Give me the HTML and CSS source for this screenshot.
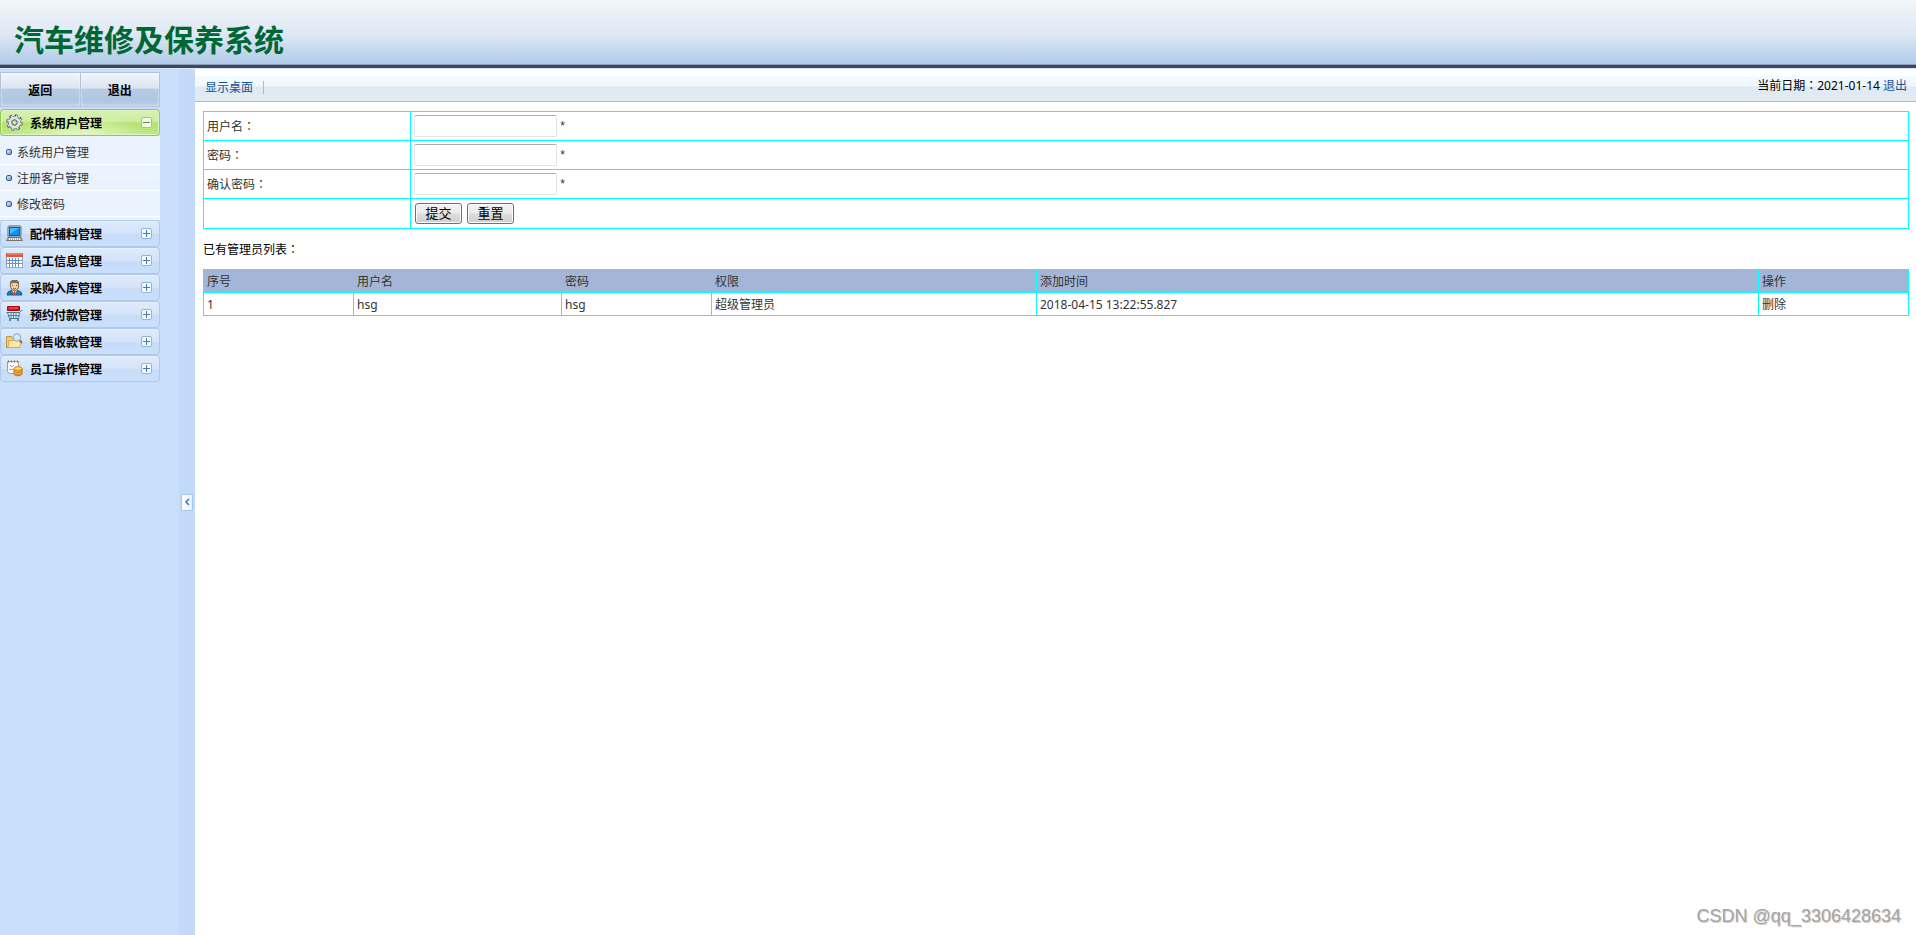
FILE: index.html
```html
<!DOCTYPE html>
<html lang="zh-CN">
<head>
<meta charset="utf-8">
<title>汽车维修及保养系统</title>
<link rel="stylesheet" href="styles.css">
</head>
<body>
<header class="banner"><h1>汽车维修及保养系统</h1></header>
<div class="frame">
  <aside class="sidebar">
    <div class="actions">
      <button type="button">返回</button>
      <button type="button">退出</button>
    </div>
    <nav class="menu">
      <button type="button" class="group open" aria-expanded="true">
        <svg class="icon" viewBox="0 0 17 17"><circle cx="8.500" cy="8.500" r="6.800" fill="none" stroke="#5c646e" stroke-width="3" stroke-dasharray="3 2.340"/><circle cx="8.500" cy="8.500" r="4.800" fill="none" stroke="#6b737d" stroke-width="4"/><circle cx="8.500" cy="8.500" r="6.500" fill="none" stroke="#dfe3e7" stroke-width="2" stroke-dasharray="1.500 3.605" stroke-dashoffset="-.7"/><circle cx="8.500" cy="8.500" r="4.500" fill="none" stroke="#dfe3e7" stroke-width="2.800"/><circle cx="8.500" cy="8.500" r="2.600" fill="#c9e89c" stroke="#5d656d"/></svg>
        <span>系统用户管理</span>
        <svg class="toggle" viewBox="0 0 11 11"><rect x=".5" y=".5" width="10" height="10" rx="1.500" fill="#f4fbe9" stroke="#a5c77c"/><path d="M2 5.500h7" stroke="#5f8c3c"/></svg>
      </button>
      <ul class="submenu">
        <li><a href="#">系统用户管理</a></li>
        <li><a href="#">注册客户管理</a></li>
        <li><a href="#">修改密码</a></li>
      </ul>
      <button type="button" class="group" aria-expanded="false">
        <svg class="icon" viewBox="0 0 17 17"><rect x="2" y="1" width="13" height="11" rx="1" fill="#dce8ef" stroke="#48677d"/><rect x="3.500" y="2.500" width="10" height="8" fill="#0b92f7" stroke="#0561b8"/><path d="M4 3h9L4 9z" fill="#48b8ff"/><path d="M2 12.500h13l1.500 3H.5z" fill="#eee" stroke="#76716d"/><path d="M2 14h13" stroke="#66605b" stroke-dasharray="1 1"/></svg>
        <span>配件辅料管理</span>
        <svg class="toggle" viewBox="0 0 11 11"><rect x=".5" y=".5" width="10" height="10" rx="1.500" fill="#f5faff" stroke="#8fb4df"/><path d="M2 5.500h7M5.500 2v7" stroke="#4878b4"/></svg>
      </button>
      <button type="button" class="group" aria-expanded="false">
        <svg class="icon" viewBox="0 0 17 17"><path d="M.5 1.500h16v14H.5z" fill="#fff" stroke="#77a3cc"/><path d="M0 1h17v4H0z" fill="#e4523f"/><path d="M1 2h15" stroke="#ff9a84"/><path d="M1 8.500h15M1 11.500h15M3.500 6v9M6.500 6v9M9.500 6v9M12.500 6v9" stroke="#5f95c8"/><path d="M0 15.500h17M16.500 5v11" stroke="#a5aaad"/></svg>
        <span>员工信息管理</span>
        <svg class="toggle" viewBox="0 0 11 11"><rect x=".5" y=".5" width="10" height="10" rx="1.500" fill="#f5faff" stroke="#8fb4df"/><path d="M2 5.500h7M5.500 2v7" stroke="#4878b4"/></svg>
      </button>
      <button type="button" class="group" aria-expanded="false">
        <svg class="icon" viewBox="0 0 17 17"><path d="M1 16l1-3 4-2h5l4 2 1 3z" fill="#247cac" stroke="#165f8a"/><path d="M6 11l2.500 5 2.500-5z" fill="#fff"/><path d="M8 12h1l1 4H7z" fill="#cf442d"/><ellipse cx="8.500" cy="6.500" rx="4.200" ry="5" fill="#f9d29a" stroke="#80613e"/><path d="M4 6V3l2-2h5l2 2v4l-2-3H6z" fill="#726f65"/><path d="M6.500 6v1M10.500 6v1M7 9l1.500 1L10 9" fill="none" stroke="#79532d"/></svg>
        <span>采购入库管理</span>
        <svg class="toggle" viewBox="0 0 11 11"><rect x=".5" y=".5" width="10" height="10" rx="1.500" fill="#f5faff" stroke="#8fb4df"/><path d="M2 5.500h7M5.500 2v7" stroke="#4878b4"/></svg>
      </button>
      <button type="button" class="group" aria-expanded="false">
        <svg class="icon" viewBox="0 0 17 17"><path d="M1.500.5h12v4h-12z" fill="#d8141b" stroke="#a70a12"/><path d="M3 2h9" stroke="#ff6d6d"/><path d="M.5 6.500h13l2-2h1M1.500 6.500l2 6h9l1-6M3 9.500h10" fill="#e5eff3" stroke="#427894"/><path d="M5 7v5M7.500 7v5M10 7v5" stroke="#5a8ba4"/><circle cx="4" cy="14" r="1" fill="#42687d"/><circle cx="12" cy="14" r="1" fill="#42687d"/></svg>
        <span>预约付款管理</span>
        <svg class="toggle" viewBox="0 0 11 11"><rect x=".5" y=".5" width="10" height="10" rx="1.500" fill="#f5faff" stroke="#8fb4df"/><path d="M2 5.500h7M5.500 2v7" stroke="#4878b4"/></svg>
      </button>
      <button type="button" class="group" aria-expanded="false">
        <svg class="icon" viewBox="0 0 17 17"><path d="M.5 14.500v-11h5l1 2h6v9z" fill="#f5cd72" stroke="#c4934b"/><path d="M2 14.500l1-7h13l-2.500 7z" fill="#ffe9a2" stroke="#d4a557"/><path d="M13 7l3 3" stroke="#97784f" stroke-width="2"/><circle cx="11" cy="4.500" r="3.700" fill="#d0e9f8" stroke="#86a9c3"/><path d="M9 4l2-1.500" stroke="#fff"/></svg>
        <span>销售收款管理</span>
        <svg class="toggle" viewBox="0 0 11 11"><rect x=".5" y=".5" width="10" height="10" rx="1.500" fill="#f5faff" stroke="#8fb4df"/><path d="M2 5.500h7M5.500 2v7" stroke="#4878b4"/></svg>
      </button>
      <button type="button" class="group" aria-expanded="false">
        <svg class="icon" viewBox="0 0 17 17"><path d="M1.500 1.500h11v7l-3 5h-6l-2-2z" fill="#f9fafb" stroke="#9d9d9b"/><path d="M2 1.500h12" stroke="#706c68" stroke-width="2" stroke-dasharray="1 2"/><path d="M4 5l2 2 2-2M3 9.500h4" fill="none" stroke="#aaa"/><path d="M8 8.500v5c0 3 8 3 8 0v-5" fill="#f9ae24" stroke="#c86c11"/><ellipse cx="12" cy="8.500" rx="4" ry="1.800" fill="#ffe072" stroke="#cf7c16"/><path d="M8 11c1 2 7 2 8 0M8 13.500c1 2 7 2 8 0" fill="none" stroke="#d97913"/></svg>
        <span>员工操作管理</span>
        <svg class="toggle" viewBox="0 0 11 11"><rect x=".5" y=".5" width="10" height="10" rx="1.500" fill="#f5faff" stroke="#8fb4df"/><path d="M2 5.500h7M5.500 2v7" stroke="#4878b4"/></svg>
      </button>
    </nav>
  </aside>
  <div class="splitter">
    <button type="button" aria-label="收起菜单"><svg viewBox="0 0 6 8"><path d="M5 1L2 4l3 3" fill="none" stroke="#3b78b0" stroke-width="1.500"/></svg></button>
  </div>
  <main class="main">
    <div class="toolbar">
      <a class="desktop" href="#">显示桌面</a>
      <div class="today">当前日期<span class="colon" lang="zh-TW">：</span>2021-01-14 <a href="#">退出</a></div>
    </div>
    <div class="content">
      <form>
        <table class="grid form-grid">
          <tr><td><label for="user">用户名<span class="colon" lang="zh-TW">：</span></label></td><td><input id="user" type="text"> <span class="required">*</span></td></tr>
          <tr><td><label for="pwd">密码<span class="colon" lang="zh-TW">：</span></label></td><td><input id="pwd" type="password"> <span class="required">*</span></td></tr>
          <tr><td><label for="pwd2">确认密码<span class="colon" lang="zh-TW">：</span></label></td><td><input id="pwd2" type="password"> <span class="required">*</span></td></tr>
          <tr><td></td><td><div class="buttons"><button type="submit">提交</button><button type="reset">重置</button></div></td></tr>
        </table>
      </form>
      <p class="caption">已有管理员列表<span class="colon" lang="zh-TW">：</span></p>
      <table class="grid list-grid">
        <colgroup><col class="c-small"><col class="c-name"><col class="c-small"><col class="c-role"><col><col class="c-small"></colgroup>
        <thead><tr><th>序号</th><th>用户名</th><th>密码</th><th>权限</th><th>添加时间</th><th>操作</th></tr></thead>
        <tbody><tr><td>1</td><td>hsg</td><td>hsg</td><td>超级管理员</td><td>2018-04-15 13:22:55.827</td><td><a href="#">删除</a></td></tr></tbody>
      </table>
    </div>
    <div class="watermark">CSDN @qq_3306428634</div>
  </main>
</div>
</body>
</html>
```
FILE: styles.css
```css
* { box-sizing: border-box; }
body {
  margin: 0;
  min-height: 100vh;
  display: flex;
  flex-direction: column;
  font: 12px/18px "Noto Sans", "Noto Sans CJK SC", sans-serif;
  color: #333;
  background: #fff;
}
a { color: inherit; text-decoration: none; }
button, input { font: inherit; }
.colon { font-family: "Noto Sans CJK TC", sans-serif; line-height: 1; }

.banner {
  height: 69px;
  flex: none;
  padding: 20px 14px 0;
  background: linear-gradient(#f2f5fa, #dfe8f4 50%, #c3d7ed 75%, #abc7e6);
  border-bottom: 1px solid #dfe9f5;
  box-shadow: inset 0 -3px #34496b, inset 0 -4px #929daf;
}
.banner h1 { margin: 0; font-size: 30px; line-height: 40px; font-weight: 700; color: #063; }

.frame { flex: 1; display: flex; }
.sidebar { flex: none; width: 179px; padding-top: 3px; background: #c9defa; }
.actions { display: flex; width: 160px; }
.actions button {
  flex: 1;
  height: 35px;
  padding: 3px 0 0;
  border: 1px solid #b3c3dc;
  box-shadow: inset 0 0 2px #fff;
  background: linear-gradient(#f2f6fb, #dbe4f0 45%, #b9cbe4 50%, #afc5e2 85%, #c1d2e8);
  font-weight: 700;
  color: #000;
}
.actions button + button { border-left-width: 0; }
.menu { width: 160px; padding-top: 2px; }
.group {
  display: flex;
  align-items: center;
  width: 100%;
  height: 27px;
  padding: 0 7px 0 5px;
  border: 1px solid #afc9ea;
  border-radius: 4px;
  background: linear-gradient(#dfebfb, #d3e3f9 50%, #c7dcf8 55%, #c9dffb);
  box-shadow: inset 0 1px #e9f2fd;
  font-weight: 700;
  color: #000;
}
.group span { flex: 1; margin: 3px 0 0 7px; text-align: left; }
.group.open {
  border-color: #94c94b;
  background: radial-gradient(ellipse at 50% 110%, #eafacd, transparent 60%), linear-gradient(#d9f1b5, #cdec9f 45%, #b4e273 52%, #bee783);
  box-shadow: inset 0 0 0 1px #e0f5bf;
}
.icon { width: 17px; height: 17px; flex: none; }
.toggle { width: 11px; height: 11px; flex: none; }
.submenu { margin: 0; padding: 3px 0; list-style: none; background: #ebf3ff; }
.submenu li { height: 26px; border-bottom: 1px solid #fff; }
.submenu a { display: flex; align-items: center; gap: 6px; height: 28px; padding-left: 6px; }
.submenu a::before {
  content: "";
  box-sizing: border-box;
  width: 6px;
  height: 6px;
  margin-bottom: 3px;
  border: 1px solid #3a5a86;
  border-radius: 2px;
  background: linear-gradient(135deg, #e0f0ff, #5c9ce8);
}

.splitter { flex: none; width: 16px; display: flex; align-items: center; justify-content: center; background: #c3d9f8; }
.splitter button {
  display: flex;
  align-items: center;
  justify-content: center;
  width: 12px;
  height: 17px;
  padding: 0;
  border: 1px solid #a5c6ed;
  border-radius: 1px;
  background: linear-gradient(90deg, #fff, #e6f0fc);
}
.splitter svg { width: 6px; height: 8px; }

.main { flex: 1; min-width: 0; display: flex; flex-direction: column; }
.toolbar {
  display: flex;
  justify-content: space-between;
  height: 33px;
  margin-bottom: 9px;
  padding: 1px 9px 0 10px;
  border-top: 7px solid #fff;
  border-bottom: 1px solid #a9b9cc;
  background: linear-gradient(#f5fbff, #f0f7fd 40%, #dfe9f3 45%, #e2ecf5);
}
.toolbar a { color: #15539b; }
.desktop { display: flex; align-items: center; gap: 10px; height: 21px; }
.desktop::after { content: ""; width: 1px; height: 13px; background: #a9bccd; }
.today { color: #000; }

.content { padding: 0 7px 0 8px; }
.grid { width: 100%; table-layout: fixed; border-collapse: collapse; border: 1px solid #0ff; }
.grid td, .grid th { padding: 3px 3px 1px; border: 1px solid #0ff; text-align: left; font-weight: 400; }
.form-grid td { height: 29px; }
.form-grid td:first-child { width: 207px; }
.form-grid td:last-child { padding: 2px 3px; }
.form-grid tr:last-child td { height: 30px; }
.form-grid input {
  width: 143px;
  height: 22px;
  padding: 1px 3px;
  border: 1px solid #e2e3ea;
  border-top-color: #abadb3;
  border-radius: 2px;
  background: #fff;
  vertical-align: middle;
}
.required { font-family: "Liberation Sans", sans-serif; vertical-align: middle; }
.buttons { display: flex; gap: 5px; padding-left: 1px; }
.buttons button {
  width: 47px;
  height: 21px;
  padding: 0;
  border: 1px solid #707070;
  border-radius: 3px;
  background: linear-gradient(#f2f2f2, #ebebeb 48%, #ddd 52%, #cfcfcf);
  box-shadow: inset 0 0 0 1px #fbfbfb;
  font-size: 13px;
  line-height: 19px;
  color: #000;
}
.caption { margin: 12px 0 10px; color: #000; }
.list-grid th, .list-grid td { height: 23px; }
.list-grid th { background: #a4b6d7; }
.c-small { width: 150px; }
.c-name { width: 208px; }
.c-role { width: 325px; }
.submenu a { gap: 5px; padding-left: 6px; }
.submenu a::before { width: 6px; flex: none; }

.watermark {
  margin-top: auto;
  padding: 0 15px 7px 0;
  text-align: right;
  font: 18px/24px "Liberation Sans", Arial, sans-serif;
  color: #a4a4a4;
  text-shadow: 1px 1px 1px #ccc;
}
.submenu a::before { box-shadow: none; }
```
